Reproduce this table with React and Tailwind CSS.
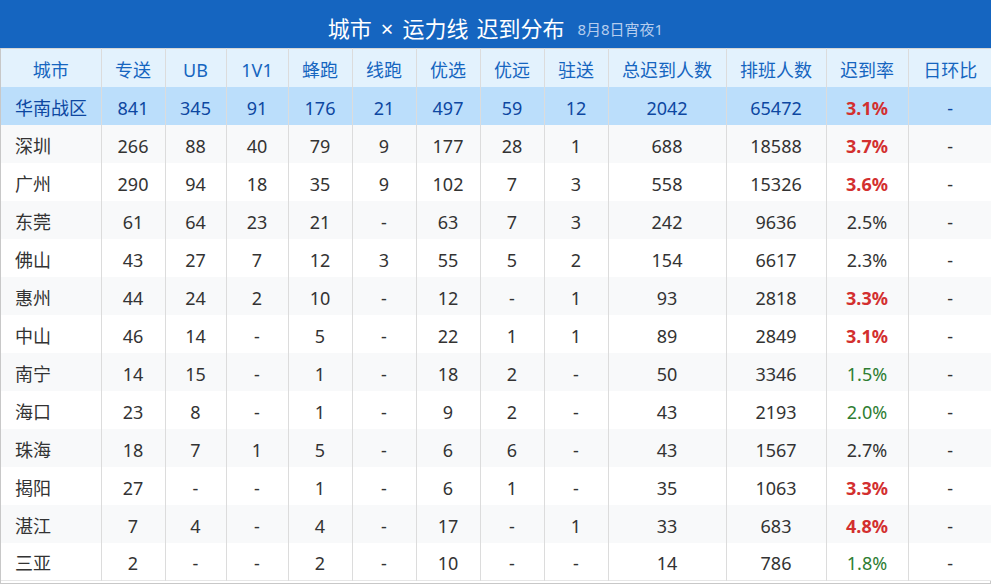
import React from "react";

const cols = [
  { key: "city", label: "城市", w: "w-[100px]" },
  { key: "zs", label: "专送", w: "w-[64px]" },
  { key: "ub", label: "UB", w: "w-[61px]" },
  { key: "v1", label: "1V1", w: "w-[62px]" },
  { key: "fp", label: "蜂跑", w: "w-[64px]" },
  { key: "xp", label: "线跑", w: "w-[64px]" },
  { key: "yx", label: "优选", w: "w-[64px]" },
  { key: "yy", label: "优远", w: "w-[64px]" },
  { key: "zhs", label: "驻送", w: "w-[64px]" },
  { key: "total", label: "总迟到人数", w: "w-[118px]" },
  { key: "sched", label: "排班人数", w: "w-[100px]" },
  { key: "rate", label: "迟到率", w: "w-[82px]" },
  { key: "dod", label: "日环比", w: "w-[84px]" },
];

// city, 专送, UB, 1V1, 蜂跑, 线跑, 优选, 优远, 驻送, 总迟到, 排班, 迟到率, 是否超标
const summary = ["华南战区", "841", "345", "91", "176", "21", "497", "59", "12", "2042", "65472", "3.1%", true];

const rows = [
  ["深圳", "266", "88", "40", "79", "9", "177", "28", "1", "688", "18588", "3.7%", true],
  ["广州", "290", "94", "18", "35", "9", "102", "7", "3", "558", "15326", "3.6%", true],
  ["东莞", "61", "64", "23", "21", "-", "63", "7", "3", "242", "9636", "2.5%", null],
  ["佛山", "43", "27", "7", "12", "3", "55", "5", "2", "154", "6617", "2.3%", null],
  ["惠州", "44", "24", "2", "10", "-", "12", "-", "1", "93", "2818", "3.3%", true],
  ["中山", "46", "14", "-", "5", "-", "22", "1", "1", "89", "2849", "3.1%", true],
  ["南宁", "14", "15", "-", "1", "-", "18", "2", "-", "50", "3346", "1.5%", false],
  ["海口", "23", "8", "-", "1", "-", "9", "2", "-", "43", "2193", "2.0%", false],
  ["珠海", "18", "7", "1", "5", "-", "6", "6", "-", "43", "1567", "2.7%", null],
  ["揭阳", "27", "-", "-", "1", "-", "6", "1", "-", "35", "1063", "3.3%", true],
  ["湛江", "7", "4", "-", "4", "-", "17", "-", "1", "33", "683", "4.8%", true],
  ["三亚", "2", "-", "-", "2", "-", "10", "-", "-", "14", "786", "1.8%", false],
];

function rateClass(flag) {
  if (flag === true) return "text-[#d32f2f] font-bold";
  if (flag === false) return "text-[#2e7d32]";
  return "";
}

function DataRow({ r, i, isSummary }) {
  const bg = isSummary ? "bg-[#bbdefb] text-[#0d47a1]" : i % 2 === 0 ? "bg-[#f8f9fa] text-[#333]" : "bg-white text-[#333]";
  return (
    <tr className={bg}>
      <td className="h-[38px] pl-[14px] pt-[5px] text-left border-r border-[#dcdcdc]">{r[0]}</td>
      {r.slice(1, 11).map((v, k) => (
        <td key={k} className="h-[38px] pt-[5px] text-center border-r border-[#dcdcdc]">
          {v}
        </td>
      ))}
      <td className={`h-[38px] pt-[5px] text-center border-r border-[#dcdcdc] ${rateClass(r[12])}`}>{r[11]}</td>
      <td className="h-[38px] pt-[5px] text-center">-</td>
    </tr>
  );
}

export default function App() {
  return (
    <div className="w-[991px] h-[584px] overflow-hidden bg-white font-['Noto_Sans','Noto_Sans_CJK_SC',sans-serif]">
      <div className="h-12 bg-[#1565c0] flex items-center justify-center pt-2 text-white">
        <span className="text-[22px] leading-none">
          城市<span className="mx-[9px]">×</span>运力线<span className="ml-[8px]">迟到分布</span>
        </span>
        <span className="ml-[13px] text-[15px] leading-none text-[#b6cdee] pt-[3px]">8月8日宵夜1</span>
      </div>
      <div className="border-x border-b border-[#c8c8c8] pb-[2px]">
        <table className="w-full table-fixed border-collapse text-[18px] leading-[27px]">
          <colgroup>
            {cols.map((c) => (
              <col key={c.key} className={c.w} />
            ))}
          </colgroup>
          <thead>
            <tr className="bg-[#e3f2fd] text-[#1565c0]">
              {cols.map((c, k) => (
                <th
                  key={c.key}
                  className={`h-[38px] pt-[5px] font-normal text-center border-t border-[#d6d6d6] ${k < cols.length - 1 ? "border-r border-r-[#dcdcdc]" : ""}`}
                >
                  {c.label}
                </th>
              ))}
            </tr>
          </thead>
          <tbody className="border-b border-[#e6e6e6]">
            <DataRow r={summary} i={-1} isSummary />
            {rows.map((r, i) => (
              <DataRow key={r[0]} r={r} i={i} />
            ))}
          </tbody>
        </table>
      </div>
    </div>
  );
}
